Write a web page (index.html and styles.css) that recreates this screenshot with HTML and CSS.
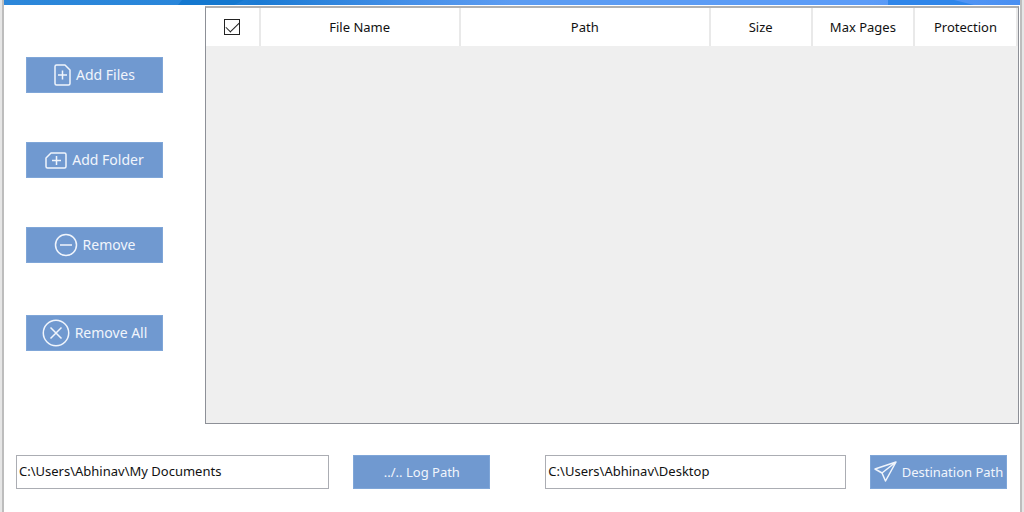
FILE: index.html
```html
<!DOCTYPE html>
<html lang="en">
<head>
<meta charset="utf-8">
<title>File Manager</title>
<link rel="stylesheet" href="styles.css">
</head>
<body>
<div class="window">
  <header class="banner">
    <svg class="banner-art" viewBox="0 0 1016 5" preserveAspectRatio="none" aria-hidden="true">
      <path d="M178 0H240L230 5H174Z" fill="#1478cf"/>
      <path d="M884 0H950L970 5H884Z" fill="#2f86ea"/>
    </svg>
  </header>
  <main class="workspace">
    <nav class="sidebar" aria-label="File actions">
      <button class="btn" type="button">
        <svg class="icon icon-file" width="17" height="22" viewBox="0 0 17 22" aria-hidden="true"><path d="M2.500 1H11L16 6V19.500Q16 21 14.500 21H2.500Q1 21 1 19.500V2.500Q1 1 2.500 1ZM8.500 6.500V15.500M4 11H13"/></svg>
        <span>Add Files</span>
      </button>
      <button class="btn" type="button">
        <svg class="icon" width="22" height="17" viewBox="0 0 22 17" aria-hidden="true"><path d="M6 1H19.500Q21 1 21 2.500V14.500Q21 16 19.500 16H2.500Q1 16 1 14.500V6ZM11.500 4V13M7 8.500H16"/></svg>
        <span>Add Folder</span>
      </button>
      <button class="btn" type="button">
        <svg class="icon" width="24" height="24" viewBox="0 0 24 24" aria-hidden="true"><circle cx="12" cy="12" r="10.500"/><path d="M6 12H18"/></svg>
        <span>Remove</span>
      </button>
      <button class="btn btn-last" type="button">
        <svg class="icon icon-all" width="28" height="28" viewBox="0 0 28 28" aria-hidden="true"><circle cx="14" cy="14" r="12.700"/><path d="M8.500 8.500L19.500 19.500M19.500 8.500L8.500 19.500"/></svg>
        <span>Remove All</span>
      </button>
    </nav>
    <section class="list">
      <table class="files">
        <colgroup><col class="col-check"><col class="col-name"><col class="col-path"><col class="col-size"><col class="col-pages"><col class="col-protect"></colgroup>
        <thead>
          <tr>
            <th scope="col"><input class="check" type="checkbox" aria-label="Select all" checked></th>
            <th scope="col">File Name</th>
            <th scope="col">Path</th>
            <th scope="col">Size</th>
            <th scope="col">Max Pages</th>
            <th scope="col">Protection</th>
          </tr>
        </thead>
      </table>
    </section>
  </main>
  <footer class="paths">
    <input class="field field-log" type="text" aria-label="Log path" value="C:\Users\Abhinav\My Documents">
    <button class="btn" type="button">../.. Log Path</button>
    <input class="field field-dest" type="text" aria-label="Destination path" value="C:\Users\Abhinav\Desktop">
    <button class="btn btn-dest" type="button">
      <svg class="icon icon-send" width="23" height="22" viewBox="0 0 23 22" aria-hidden="true"><path d="M1 8L22 1L11.500 20L8 12ZM8 12L22 1"/></svg>
      <span>Destination Path</span>
    </button>
  </footer>
</div>
</body>
</html>
```
FILE: styles.css
```css
* {
  box-sizing: border-box;
}

body {
  margin: 0;
  padding: 0 2px;
  background: #e6e6e6;
  font: 13px/18px "Noto Sans", "Open Sans", sans-serif;
  color: #111;
}

.window {
  display: flex;
  flex-direction: column;
  min-height: 100vh;
  border: solid #bdbdbd;
  border-width: 0 2px;
  background: #fff;
}

.banner {
  height: 5px;
  margin-bottom: 1px;
  background: linear-gradient(90deg, #2c87da 0%, #2986da 18%, #1b7bd4 25%, #4690e8 40%, #5c9cf2 50%, #5c9cf8 85%, #4a90f2 100%);
}

.banner-art {
  display: block;
  width: 100%;
  height: 100%;
}

.workspace {
  display: flex;
  flex: 1;
}

.sidebar {
  display: flex;
  flex: none;
  flex-direction: column;
  gap: 49px;
  padding: 51px 42px 0 22px;
}

.btn {
  display: flex;
  flex: none;
  align-items: center;
  justify-content: center;
  gap: 5px;
  width: 137px;
  height: 36px;
  padding: 0;
  border: 1px solid #7fa6d8;
  background: #7099d0;
  color: #f0f5fc;
  font: 14px/20px "Noto Sans", "Open Sans", sans-serif;
  white-space: nowrap;
}

.btn-last {
  margin-top: 3px;
}

.icon {
  flex: none;
  fill: none;
  stroke: #f0f5fc;
  stroke-width: 1.5;
  stroke-linejoin: round;
}

.list {
  flex: 1;
  min-width: 0;
  margin-right: 1px;
  border: solid #8d9097;
  border-width: 2px 1px 1px;
  border-top-color: #b0b0b0;
  background: #efefef;
}

.files {
  width: 100%;
  border-collapse: collapse;
  table-layout: fixed;
}

.files th {
  height: 38px;
  padding: 0 0 1px;
  border-right: 2px solid #e9e9e9;
  background: #fff;
  font-weight: 400;
}

.col-check { width: 6.6%; }
.col-name { width: 24.7%; }
.col-path { width: 30.8%; }
.col-size { width: 12.6%; }
.col-pages { width: 12.6%; }
.col-protect { width: 12.7%; }

.check {
  display: block;
  width: 16px;
  height: 16px;
  margin: 0 auto;
  border: 1px solid #222;
  appearance: none;
  background: #fff;
}

.check:checked::before {
  content: "";
  display: block;
  width: 12px;
  height: 6px;
  margin: 2px 1px;
  border: solid #222;
  border-width: 0 0 1px 1px;
  transform: rotate(-45deg);
}

.paths {
  display: flex;
  align-items: center;
  padding: 31px 13px 23px 12px;
}

.paths .btn {
  height: 34px;
  margin-left: 24px;
  font-size: 13px;
}

.field {
  min-width: 0;
  height: 34px;
  padding: 0 2px 2px;
  border: 1px solid #abadb3;
  background: #fff;
  color: #111;
  font: 13px/18px "Noto Sans", "Open Sans", sans-serif;
}

.field-log {
  flex: 314 1 0;
}

.field-dest {
  flex: 301 1 0;
  margin-left: 55px;
}
```
